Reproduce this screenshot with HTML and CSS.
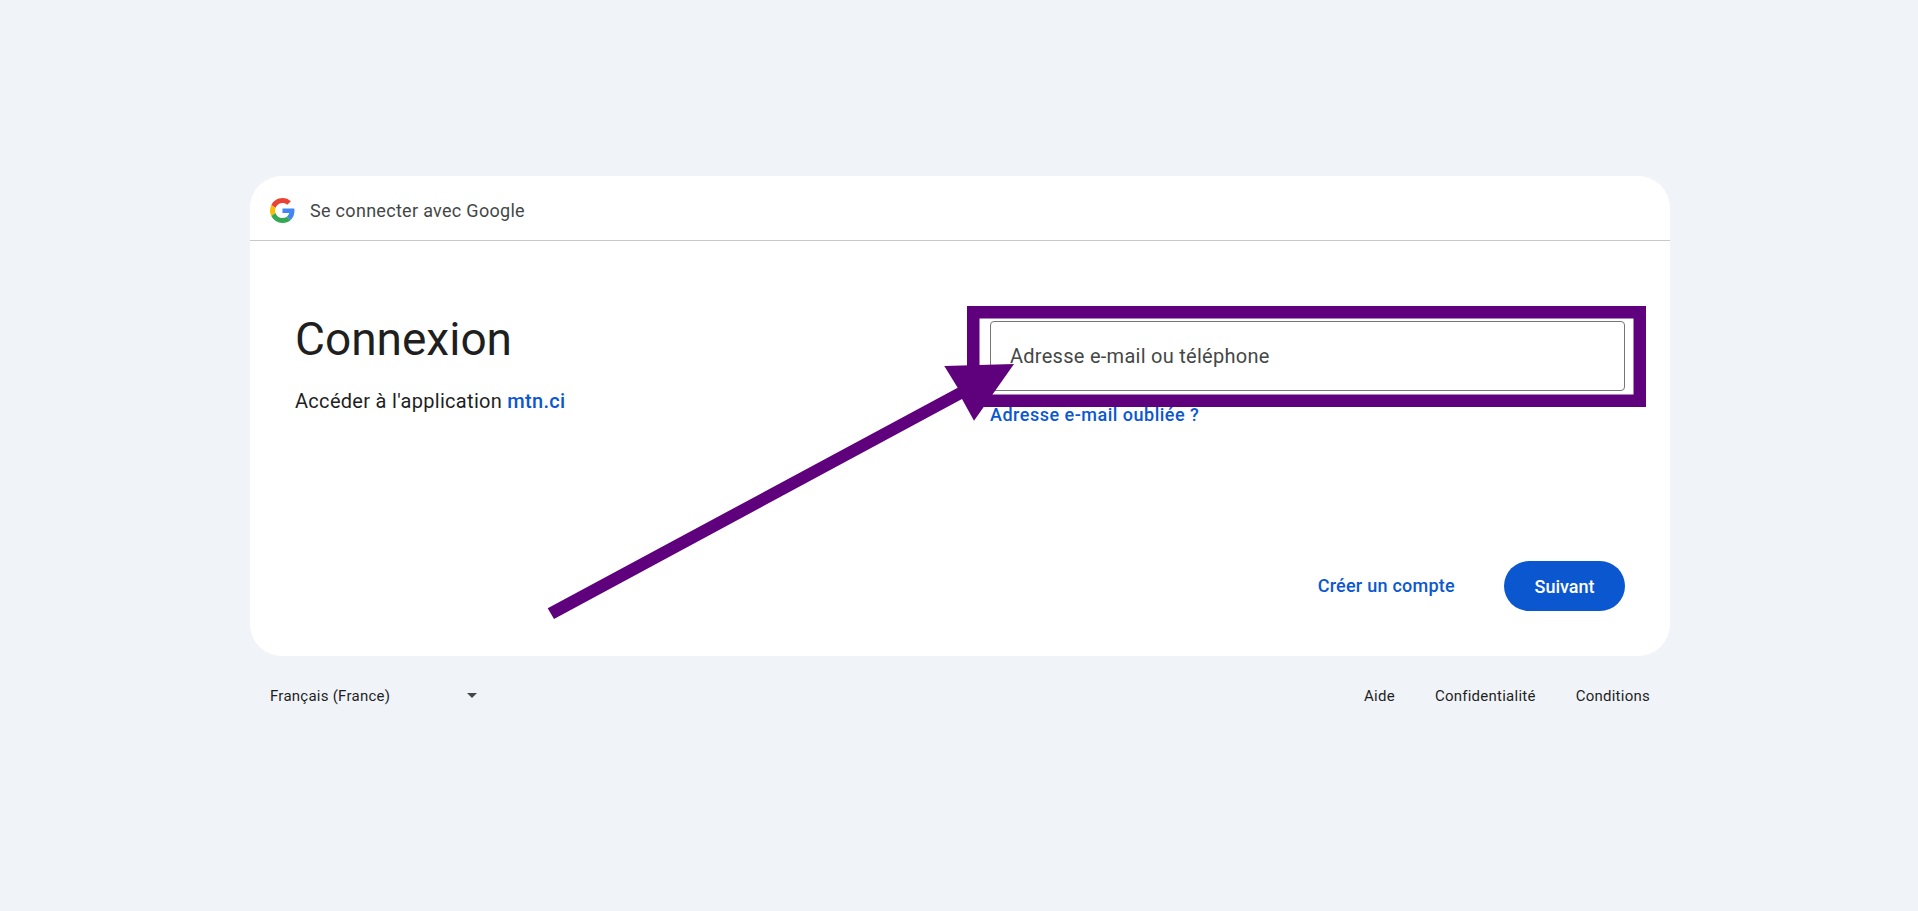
FILE: index.html
```html
<!DOCTYPE html>
<html lang="fr">
<head>
<meta charset="utf-8">
<title>Connexion - Comptes Google</title>
<link rel="stylesheet" href="styles.css">
</head>
<body>
<div class="page">
  <main class="card">
    <header class="card-header">
      <svg class="g-logo" viewBox="0 0 48 48" aria-hidden="true">
        <path fill="#EA4335" d="M24 9.5c3.54 0 6.71 1.22 9.21 3.6l6.85-6.85C35.9 2.38 30.47 0 24 0 14.62 0 6.51 5.38 2.56 13.22l7.98 6.19C12.43 13.72 17.74 9.5 24 9.5z"/>
        <path fill="#4285F4" d="M46.98 24.55c0-1.57-.15-3.09-.38-4.55H24v9.02h12.94c-.58 2.96-2.26 5.48-4.78 7.18l7.73 6c4.51-4.18 7.09-10.36 7.09-17.65z"/>
        <path fill="#FBBC05" d="M10.53 28.59c-.48-1.45-.76-2.99-.76-4.59s.27-3.14.76-4.59l-7.98-6.19C.92 16.46 0 20.12 0 24c0 3.88.92 7.54 2.56 10.78l7.97-6.19z"/>
        <path fill="#34A853" d="M24 48c6.48 0 11.93-2.13 15.89-5.81l-7.73-6c-2.15 1.45-4.92 2.3-8.16 2.3-6.26 0-11.57-4.22-13.47-9.91l-7.98 6.19C6.51 42.62 14.62 48 24 48z"/>
      </svg>
      <span class="header-title">Se connecter avec Google</span>
    </header>
    <section class="card-body">
      <div class="intro">
        <h1 class="heading">Connexion</h1>
        <p class="subtitle">Accéder à l'application <a class="link-app" href="#">mtn.ci</a></p>
      </div>
      <div class="form">
        <div class="field"><span class="placeholder">Adresse e-mail ou téléphone</span></div>
        <a class="link-forgot" href="#">Adresse e-mail oubliée ?</a>
        <div class="actions">
          <a class="link-create" href="#">Créer un compte</a>
          <button class="btn-next" type="button">Suivant</button>
        </div>
      </div>
    </section>
  </main>
  <footer class="footer">
    <div class="lang">
      <span>Français (France)</span>
      <span class="caret"></span>
    </div>
    <nav class="footer-links">
      <a href="#">Aide</a>
      <a href="#">Confidentialité</a>
      <a href="#">Conditions</a>
    </nav>
  </footer>
</div>
<svg class="annotation" viewBox="0 0 1918 911" aria-hidden="true">
  <rect class="anno-box" x="973.25" y="312.25" width="666.5" height="88.5"/>
  <polygon class="anno-arrow" points="547.7,608.3 554,619 962,399 974,420.7 1014,364 944.3,366 957.7,387.7"/>
</svg>
</body>
</html>
```
FILE: styles.css
```css
* { box-sizing: border-box; }
html, body { margin: 0; height: 100%; }
body {
  background: #f0f4f9;
  color: #1f1f1f;
  font-family: "Roboto", "Liberation Sans", sans-serif;
  position: relative;
  overflow: hidden;
}
a { text-decoration: none; color: inherit; }
.page {
  height: 100%;
  padding-left: 2px;
  display: flex;
  flex-direction: column;
  align-items: center;
  justify-content: center;
}
.card {
  width: 1420px;
  height: 480px;
  background: #fff;
  border-radius: 32px;
  display: flex;
  flex-direction: column;
}
.card-header {
  height: 65px;
  flex: none;
  display: flex;
  align-items: center;
  gap: 15px;
  padding: 4px 20px 0;
  border-bottom: 1px solid #c7c7c7;
}
.g-logo { width: 25px; height: 25px; flex: none; }
.header-title { font-size: 18px; letter-spacing: 0.3px; color: #444746; }
.card-body {
  flex: 1;
  display: grid;
  grid-template-columns: 1fr 635px;
  padding: 70px 45px 45px;
}
.heading { margin: 0; font-size: 46px; font-weight: 400; line-height: 56px; }
.subtitle { margin: 22px 0 0; font-size: 20px; line-height: 24px; letter-spacing: 0.3px; }
.link-app { color: #0b57d0; font-weight: 500; }
.form { margin-top: 10px; display: flex; flex-direction: column; align-items: flex-start; }
.field {
  width: 100%;
  height: 70px;
  border: 1px solid #747775;
  border-radius: 4px;
  padding: 0 19px;
  display: flex;
  align-items: center;
}
.placeholder { font-size: 20px; letter-spacing: 0.27px; color: #444746; }
.link-forgot { margin-top: 14px; font-size: 18px; letter-spacing: 0.5px; font-weight: 500; color: #0b57d0; line-height: 20px; }
.actions {
  margin-top: auto;
  margin-bottom: 1px;
  width: 100%;
  display: flex;
  justify-content: flex-end;
  align-items: center;
  gap: 49px;
}
.link-create { font-size: 18px; letter-spacing: 0.25px; font-weight: 500; color: #0b57d0; }
.btn-next {
  width: 121px;
  height: 50px;
  margin-bottom: -1px;
  border: 0;
  border-radius: 25px;
  background: #0b57d0;
  color: #fff;
  font: 500 18px "Roboto", "Liberation Sans", sans-serif;
}
.footer {
  width: 1420px;
  height: 79px;
  padding: 0 20px;
  display: flex;
  align-items: center;
  justify-content: space-between;
  font-size: 15px;
  letter-spacing: 0.25px;
}
.lang { width: 207px; display: flex; align-items: center; justify-content: space-between; }
.caret {
  width: 0;
  height: 0;
  border-left: 5px solid transparent;
  border-right: 5px solid transparent;
  border-top: 5px solid #444746;
}
.footer-links { display: flex; gap: 40px; }
.annotation { position: absolute; left: 0; top: 0; width: 1918px; height: 911px; pointer-events: none; }
.anno-box { fill: none; stroke: #5f007c; stroke-width: 12.5; }
.anno-arrow { fill: #5f007c; }
```
